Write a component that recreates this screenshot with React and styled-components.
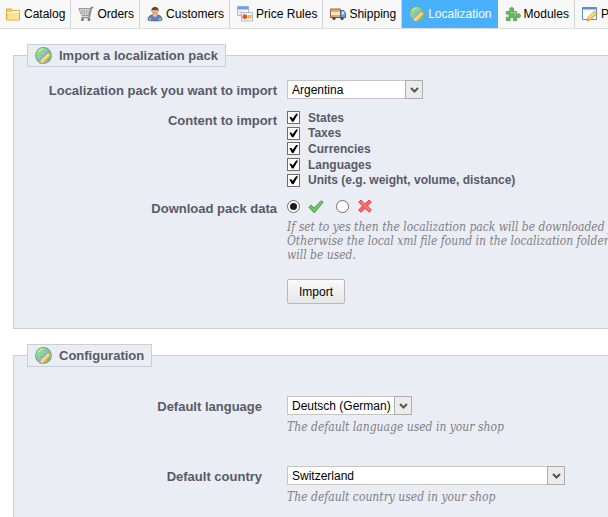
import React from "react";
import styled, { createGlobalStyle } from "styled-components";

const COLORS = {
  text: "#585a69",
  panel: "#ebedf4",
  border: "#ccced7",
  active: "#49b0fe",
  help: "#7f7f85",
};

const FONTS = {
  sans: '"Liberation Sans", Arial, sans-serif',
  serif: '"DejaVu Serif Condensed", "DejaVu Serif", Georgia, serif',
};

const FolderIcon = () => (
  <Icon viewBox="0 0 16 16">
    <path d="M1.500 3h5l1 1.500h7V14h-13z" fill="#f5cf62" stroke="#dcae42" />
    <path d="M2 6h12v1.500H2z" fill="#fff6cf" />
    <path d="M2 13.500 4 8h10v5.500z" fill="#fbe391" />
    <path d="M7.500 5.500H14" stroke="#fffbe6" />
  </Icon>
);

const CartIcon = () => (
  <Icon viewBox="0 0 16 16">
    <path d="M.8 2.500h12L11.200 9.500H3.800z" fill="#e4e4e4" stroke="#9a9a9a" />
    <path
      d="M3.800 3l1.700 6.500M6.500 3v6.500M9 3l-.5 6.500M11.300 3l-1 6.500M1.500 5h10.500M3 7h8.500"
      stroke="#a8a8a8"
      strokeWidth=".8"
    />
    <path
      d="M15.500 1.500h-2L11.200 11.500H3.500"
      fill="none"
      stroke="#8a8a8a"
      strokeWidth="1.500"
    />
    <circle cx="4.500" cy="13.500" r="1.500" fill="#777" />
    <circle cx="11" cy="13.500" r="1.500" fill="#777" />
  </Icon>
);

const CustomerIcon = () => (
  <Icon viewBox="0 0 16 16">
    <path
      d="M1 14c0-3 1.500-4.500 4-5h6c2.500.5 4 2 4 5-2 1.200-12 1.200-14 0z"
      fill="#4a86cf"
      stroke="#2b5f9f"
      strokeWidth=".7"
    />
    <path d="M6 9h4l-2 4z" fill="#f7efe9" />
    <path d="M7.500 10h1l.5 4-1 .8-1-.8z" fill="#d8513d" />
    <ellipse cx="8" cy="5.800" rx="3" ry="3.600" fill="#e8a873" />
    <path
      d="M4.500 6C4 2.500 5.500 1 8 1s4.200 1.500 3.600 5c-.5-1.500-1-2-1.800-2.200-1.800.4-3.200.2-4.200.2-.6.5-.9 1-1.100 2z"
      fill="#70401f"
    />
    <circle cx="3" cy="13" r="1.200" fill="#e8a873" />
    <circle cx="13" cy="13" r="1.200" fill="#e8a873" />
  </Icon>
);

const PriceRulesIcon = () => (
  <Icon viewBox="0 0 16 16">
    <path d="M.5 .5h11v9H.5z" fill="#f6f9fe" stroke="#a4bfe6" />
    <path d="M.5 .5h11v3H.5z" fill="#6e9fe0" />
    <path d="M2 6h3M2 8h2" stroke="#b7cae8" />
    <path d="M4.500 6.500h11v8.500h-11z" fill="#fbf7f2" stroke="#b5b5bd" />
    <circle cx="7.800" cy="10.700" r="2.400" fill="#e54b3c" />
    <path d="M10.500 9h4v3.500h-4z" fill="#f2b544" />
  </Icon>
);

const TruckIcon = () => (
  <Icon viewBox="0 0 16 16">
    <path d="M.5 3h10v8.500H.5z" fill="#e9a765" stroke="#9b6c42" />
    <path d="M1 6h9v3H1z" fill="#fae5bd" />
    <path d="M10.500 4.500h3l2 3v4h-5z" fill="#7b9bd2" stroke="#46639f" />
    <path d="M12 5.500h1.200l1.300 2.700H12z" fill="#e5effb" />
    <path d="M.5 11.500h15" stroke="#555b70" />
    <circle cx="4" cy="12.500" r="1.600" fill="#45454f" />
    <circle cx="12" cy="12.500" r="1.600" fill="#45454f" />
  </Icon>
);

const GlobeIcon = ({ large }) => (
  <Icon viewBox="0 0 16 16" $large={large}>
    <circle cx="8" cy="8" r="7.400" fill="#79bfe0" stroke="#6fae70" />
    <path
      d="M1 7c.5-3 3-5.500 6-6 2 0 3.500.5 4.800 1.500L9.500 4 8 6.500 5.500 7.500 4 10.500 2 11z"
      fill="#93d487"
    />
    <path d="M13 4c1.500 1.700 2 4 1.500 6.200L12 13l-1.500-4z" fill="#6dbd66" />
    <path d="M3 5c1-2 2.500-3 4.500-3.200" stroke="#d8f3d0" fill="none" />
    <path
      d="M12.500 5.500l2.500 2.500-6.500 6.500-4 1 1-3.500z"
      fill="#f7c95e"
      stroke="#d39a45"
      strokeWidth=".7"
    />
    <path d="M12.700 6.700l-6 6" stroke="#fff0b0" />
    <path d="M5.500 12.200 8.200 14.500l-3.700 1z" fill="#f5deb8" />
    <path d="M4.500 15.500l.4-1.500 1 1z" fill="#7c5a3b" />
  </Icon>
);

const ModulesIcon = () => (
  <Icon viewBox="0 0 16 16">
    <path
      d="M1.500 5.500h4C4 3.500 4.800 1.500 6.700 1.500s2.700 2 1.300 4h3.500v3c2-1.300 4-.6 4 1.200s-2 2.500-4 1.200v3.600H8.300c1-2-.1-3-1.500-3s-2.500 1-1.500 3H1.500v-3.300c2 .7 2.700-.3 2.700-1.500s-.8-2-2.700-1.400z"
      fill="#68b565"
      stroke="#4a994d"
      strokeWidth=".8"
    />
    <path d="M5.500 6.500h5v3" fill="none" stroke="#a2d79b" />
  </Icon>
);

const PreferencesIcon = () => (
  <Icon viewBox="0 0 16 16">
    <path d="M.5 1.500h14v12H.5z" fill="#fff" stroke="#5a8fd6" />
    <path d="M.5 1h14v2.500H.5z" fill="#5a8fd6" />
    <path
      d="M12.500 5l2.500 2.500-6.500 6.500-3.500 1 1-3.500z"
      fill="#f8c95c"
      stroke="#c58a35"
      strokeWidth=".8"
    />
    <path d="M12.700 6.500l-5.500 5.500" stroke="#fff0b5" />
  </Icon>
);

const YesIcon = () => (
  <Icon viewBox="0 0 16 16" role="img" aria-label="Yes">
    <path
      d="M.8 8.200l2.400-2 3 2.800 6.800-7.200 2.200 1.300-8.400 10.200H5.600z"
      fill="#62bf58"
      stroke="#3d9a40"
      strokeWidth=".9"
    />
    <path d="M2.500 8l3.500 3.500L13 3" fill="none" stroke="#8bd67f" />
  </Icon>
);

const NoIcon = () => (
  <Icon viewBox="0 0 16 16" role="img" aria-label="No">
    <path
      d="M1.700 3l2.300-2 4 4 4-4 2.300 2L10.500 7l4 4-2.300 2.300L8 9.300l-4.200 4L1.500 11l4-4z"
      fill="#fa6464"
      stroke="#e03c3c"
      strokeWidth=".9"
    />
    <path d="M4 2.500L12.500 11" stroke="#ff9b94" />
  </Icon>
);

const TABS = [
  { name: "Catalog", icon: FolderIcon },
  { name: "Orders", icon: CartIcon },
  { name: "Customers", icon: CustomerIcon },
  { name: "Price Rules", icon: PriceRulesIcon },
  { name: "Shipping", icon: TruckIcon },
  { name: "Localization", icon: GlobeIcon, active: true },
  { name: "Modules", icon: ModulesIcon },
  { name: "Preferences", icon: PreferencesIcon },
];

const CONTENTS = [
  "States",
  "Taxes",
  "Currencies",
  "Languages",
  "Units (e.g. weight, volume, distance)",
];

const Select = ({ id, width, options }) => (
  <SelectBox $width={width}>
    <SelectInput id={id}>
      {options.map((option) => (
        <option key={option}>{option}</option>
      ))}
    </SelectInput>
    <SelectArrow>
      <svg width="9" height="8" viewBox="0 0 9 8">
        <path d="M1 2l3.500 3.500L8 2" fill="none" stroke="#555" strokeWidth="2" />
      </svg>
    </SelectArrow>
  </SelectBox>
);

const App = () => {
  return (
    <Page>
      <GlobalStyle />
      <nav>
        <TabList>
          {TABS.map(({ name, icon: TabIcon, active }) => (
            <Tab key={name} $active={active}>
              <a href="#tab">
                <TabIcon />
                {name}
              </a>
            </Tab>
          ))}
        </TabList>
      </nav>
      <Main>
        <Panel>
          <Legend>
            <GlobeIcon large />
            Import a localization pack
          </Legend>
          <Row>
            <Label htmlFor="pack">Localization pack you want to import</Label>
            <Select id="pack" width={136} options={["Argentina"]} />
          </Row>
          <Row $gap={11}>
            <Label as="span" id="contents">
              Content to import
            </Label>
            <CheckList role="group" aria-labelledby="contents">
              {CONTENTS.map((name) => (
                <CheckLabel key={name}>
                  <Checkbox type="checkbox" defaultChecked />
                  {name}
                </CheckLabel>
              ))}
            </CheckList>
          </Row>
          <Row $gap={10}>
            <Label as="span" id="download">
              Download pack data
            </Label>
            <div>
              <RadioList role="radiogroup" aria-labelledby="download">
                <RadioLabel>
                  <Radio type="radio" name="download" defaultChecked />
                  <YesIcon />
                </RadioLabel>
                <RadioLabel>
                  <Radio type="radio" name="download" />
                  <NoIcon />
                </RadioLabel>
              </RadioList>
              <Help>
                If set to yes then the localization pack will be downloaded from
                <br />
                Otherwise the local xml file found in the localization folder of
                <br />
                will be used.
              </Help>
              <Button type="button">Import</Button>
            </div>
          </Row>
        </Panel>
        <Panel $last>
          <Legend>
            <GlobeIcon large />
            Configuration
          </Legend>
          <Row $narrow $gap={16}>
            <Label htmlFor="language">Default language</Label>
            <div>
              <Select id="language" width={125} options={["Deutsch (German)"]} />
              <Help>The default language used in your shop</Help>
            </div>
          </Row>
          <Row $narrow $gap={32}>
            <Label htmlFor="country">Default country</Label>
            <div>
              <Select id="country" width={278} options={["Switzerland"]} />
              <Help>The default country used in your shop</Help>
            </div>
          </Row>
        </Panel>
      </Main>
    </Page>
  );
};

const GlobalStyle = createGlobalStyle`
  * {
    box-sizing: border-box;
  }

  body {
    margin: 0;
    background-color: white;
    color: ${COLORS.text};
    font-family: ${FONTS.sans};
    font-size: 12px;
  }
`;

const Page = styled.div`
  height: 100vh;
  /* Panels and tabs run on past the window */
  overflow: hidden;
`;

const Icon = styled.svg`
  display: block;
  flex: none;
  width: ${(props) => (props.$large ? 17 : 16)}px;
  height: ${(props) => (props.$large ? 17 : 16)}px;
`;

const TabList = styled.ul`
  display: flex;
  margin: 0;
  padding: 0;
  list-style: none;
  background-color: #f8f8f8;
  border-bottom: 1px solid #dedede;
`;

const Tab = styled.li`
  flex: none;
  border-right: 1px solid ${(props) => (props.$active ? COLORS.active : "#d4d4d4")};
  background-color: ${(props) => (props.$active ? COLORS.active : "transparent")};

  a {
    display: flex;
    align-items: center;
    gap: 3px;
    height: 28px;
    padding: 0 5px 0 7px;
    color: ${(props) => (props.$active ? "white" : "black")};
    text-decoration: none;
  }

  &:first-child a {
    padding-left: 5px;
  }
`;

const Main = styled.main`
  display: flex;
  flex-direction: column;
  gap: 15px;
  padding: 15px 0 0 13px;
`;

const Panel = styled.fieldset`
  min-width: 0;
  margin: 0;
  padding: 13px 0 ${(props) => (props.$last ? 48 : 24)}px 13px;
  background-color: ${COLORS.panel};
  border: 1px solid ${COLORS.border};
  border-right: 0;
`;

const Legend = styled.legend`
  display: flex;
  align-items: center;
  gap: 7px;
  height: 23px;
  padding: 0 7px;
  background-color: ${COLORS.panel};
  border: 1px solid ${COLORS.border};
  font-size: 13px;
  font-weight: bold;
`;

const Row = styled.div`
  display: grid;
  grid-template-columns: ${(props) => (props.$narrow ? 235 : 250)}px 1fr;
  column-gap: ${(props) => (props.$narrow ? 25 : 10)}px;
  align-items: start;
  margin-top: ${(props) => props.$gap || 0}px;
`;

const Label = styled.label`
  padding-top: 3px;
  font-size: 13px;
  font-weight: bold;
  line-height: 16px;
  text-align: right;
  white-space: nowrap;
`;

const SelectBox = styled.div`
  display: grid;
  width: ${(props) => props.$width}px;
  height: 19px;
`;

const SelectInput = styled.select`
  grid-area: 1 / 1;
  appearance: none;
  padding: 0 0 0 4px;
  border: 1px solid #c5c5c5;
  border-radius: 0;
  background-color: white;
  color: black;
  font: 12px ${FONTS.sans};
`;

const SelectArrow = styled.span`
  grid-area: 1 / 1;
  justify-self: end;
  display: grid;
  place-items: center;
  width: 18px;
  border: 1px solid #adadad;
  background-color: #ececec;
  pointer-events: none;
`;

const CheckList = styled.div`
  display: flex;
  flex-direction: column;
  height: 78px;
`;

const CheckLabel = styled.label`
  display: flex;
  flex: 1;
  align-items: center;
  gap: 8px;
  font-weight: bold;
`;

const Checkbox = styled.input`
  appearance: none;
  width: 13px;
  height: 13px;
  margin: 0;
  border: 1px solid #6f6f6f;
  background-color: white;

  &:checked::before {
    content: "";
    display: block;
    height: 11px;
    background-color: black;
    clip-path: polygon(12% 42%, 30% 42%, 42% 58%, 74% 14%, 92% 14%, 50% 86%, 36% 86%);
  }
`;

const RadioList = styled.div`
  display: flex;
  gap: 12px;
`;

const RadioLabel = styled.label`
  display: flex;
  align-items: center;
  gap: 8px;
  height: 17px;
`;

const Radio = styled.input`
  appearance: none;
  display: grid;
  place-items: center;
  width: 13px;
  height: 13px;
  margin: 0;
  border: 1px solid #6f6f6f;
  border-radius: 50%;
  background-color: white;

  &:checked::before {
    content: "";
    width: 7px;
    height: 7px;
    border-radius: 50%;
    background-color: #1c1c1c;
  }
`;

const Help = styled.p`
  margin: 5px 0 0;
  color: ${COLORS.help};
  font-family: ${FONTS.serif};
  font-size: 12px;
  font-style: italic;
  line-height: 14px;
  white-space: nowrap;
`;

const Button = styled.button`
  display: block;
  height: 25px;
  margin-top: 17px;
  padding: 0 11px;
  border: 1px solid #bababa;
  border-radius: 2px;
  background-image: linear-gradient(#fbfbfb, #e6e6e6);
  color: black;
  font: 12px ${FONTS.sans};
`;

export default App;
